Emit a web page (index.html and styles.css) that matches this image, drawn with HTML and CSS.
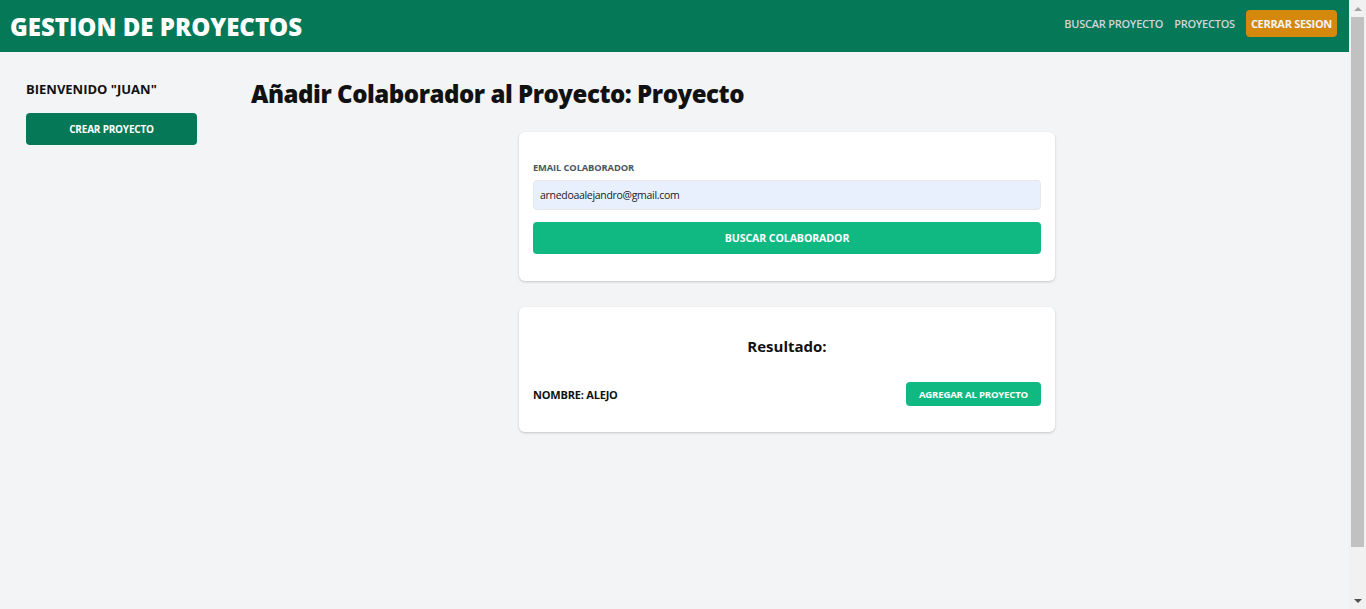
FILE: index.html
```html
<!DOCTYPE html>
<html lang="es">
<head>
<meta charset="utf-8">
<title>Gestion de Proyectos</title>
<link rel="stylesheet" href="styles.css">
</head>
<body>
<div class="page">
  <header class="header">
    <h1 class="brand">GESTION DE PROYECTOS</h1>
    <nav class="nav">
      <a class="nav-link" href="#">BUSCAR PROYECTO</a>
      <a class="nav-link" href="#">PROYECTOS</a>
      <button class="btn-logout" type="button">CERRAR SESION</button>
    </nav>
  </header>
  <div class="layout">
    <aside class="sidebar">
      <p class="welcome">BIENVENIDO "JUAN"</p>
      <a class="btn-create" href="#">CREAR PROYECTO</a>
    </aside>
    <main class="main">
      <h2 class="page-title">Añadir Colaborador al Proyecto: Proyecto</h2>
      <div class="cards">
        <form class="card card-form">
          <label class="label" for="email">EMAIL COLABORADOR</label>
          <input class="input" id="email" type="email" value="arnedoaalejandro@gmail.com">
          <button class="btn-search" type="button">BUSCAR COLABORADOR</button>
        </form>
        <section class="card card-result">
          <h3 class="result-title">Resultado:</h3>
          <div class="result-row">
            <p class="result-name">NOMBRE: ALEJO</p>
            <button class="btn-add" type="button">AGREGAR AL PROYECTO</button>
          </div>
        </section>
      </div>
    </main>
  </div>
</div>
<div class="scrollbar" aria-hidden="true">
  <span class="sb-arrow sb-up"></span>
  <span class="sb-thumb"></span>
  <span class="sb-arrow sb-down"></span>
</div>
</body>
</html>
```

FILE: styles.css
```css
* { box-sizing: border-box; }
html, body { margin: 0; padding: 0; }
body {
  background: #f3f4f6;
  font-family: "Open Sans", "Noto Sans", sans-serif;
  color: #111;
  overflow: hidden;
}
.page {
  margin-right: 17px;
  height: 100vh;
}
.header {
  height: 52px;
  background: #047857;
  display: flex;
  align-items: center;
  justify-content: space-between;
  padding: 0 12px 0 10px;
}
.brand {
  margin: 0;
  color: #fff;
  font-size: 24px;
  font-weight: 800;
}
.nav {
  display: flex;
  align-items: center;
  gap: 11px;
  margin-bottom: 5px;
}
.nav-link {
  color: #d1d5db;
  text-decoration: none;
  font-size: 11px;
  font-weight: 600;
  letter-spacing: -0.25px;
}
.btn-logout {
  border: 0;
  background: #d4890c;
  color: #f3f4f6;
  font-family: inherit;
  font-size: 11px;
  font-weight: 700;
  letter-spacing: -0.3px;
  padding: 0 5px;
  height: 27px;
  border-radius: 4px;
}
.layout {
  display: flex;
}
.sidebar {
  width: 219px;
  padding: 28px 22px 0 26px;
}
.welcome {
  margin: 0 0 15px;
  font-size: 13px;
  font-weight: 700;
  line-height: 18px;
}
.btn-create {
  display: flex;
  align-items: center;
  justify-content: center;
  height: 32px;
  background: #047857;
  color: #fff;
  text-decoration: none;
  font-size: 10px;
  font-weight: 700;
  letter-spacing: -0.2px;
  border-radius: 4px;
}
.main {
  flex: 1;
  padding: 25px 32px 32px;
}
.page-title {
  margin: 0;
  font-size: 24px;
  font-weight: 800;
  line-height: 34px;
  letter-spacing: -0.45px;
}
.cards {
  display: flex;
  flex-direction: column;
  align-items: center;
  gap: 26px;
  margin-top: 21px;
  padding-left: 6px;
}
.card {
  width: 536px;
  background: #fff;
  border-radius: 6px;
  box-shadow: 0 1px 3px rgba(0,0,0,0.12), 0 1px 2px rgba(0,0,0,0.08);
  padding: 0 14px;
}
.card-form {
  display: flex;
  flex-direction: column;
  padding-top: 30px;
  padding-bottom: 27px;
}
.label {
  font-size: 9.3px;
  font-weight: 700;
  color: #4b5563;
  letter-spacing: -0.1px;
  line-height: 12px;
  margin-bottom: 6px;
}
.input {
  height: 30px;
  border: 1px solid #e5e7eb;
  border-radius: 4px;
  background: #e8f0fe;
  font-family: inherit;
  font-size: 10.5px;
  color: #222;
  padding: 0 6px;
  letter-spacing: -0.3px;
}
.btn-search {
  margin-top: 12px;
  height: 32px;
  border: 0;
  border-radius: 4px;
  background: #10b981;
  color: #fff;
  font-family: inherit;
  font-size: 10.6px;
  font-weight: 700;
  letter-spacing: -0.1px;
}
.card-result {
  padding-top: 28px;
  padding-bottom: 26px;
}
.result-title {
  margin: 0;
  text-align: center;
  font-size: 15px;
  font-weight: 700;
  line-height: 22px;
}
.result-row {
  display: flex;
  align-items: center;
  justify-content: space-between;
  margin-top: 25px;
}
.result-name {
  margin: 0;
  font-size: 11px;
  font-weight: 700;
  letter-spacing: -0.2px;
}
.btn-add {
  height: 24px;
  border: 0;
  border-radius: 4px;
  background: #10b981;
  color: #fff;
  font-family: inherit;
  font-size: 9.6px;
  font-weight: 700;
  letter-spacing: -0.2px;
  padding: 0 13px;
}
.scrollbar {
  position: fixed;
  top: 0;
  right: 0;
  width: 17px;
  height: 100vh;
  background: #f1f1f1;
  display: flex;
  flex-direction: column;
  align-items: center;
}
.sb-arrow {
  height: 17px;
  width: 17px;
  display: flex;
  align-items: center;
  justify-content: center;
}
.sb-arrow::before {
  content: "";
  border-left: 4px solid transparent;
  border-right: 4px solid transparent;
}
.sb-up::before { border-bottom: 4px solid #a3a3a3; }
.sb-down::before { border-top: 4px solid #505050; }
.sb-thumb {
  width: 13px;
  height: 530px;
  background: #c1c1c1;
  margin-bottom: auto;
}
```
